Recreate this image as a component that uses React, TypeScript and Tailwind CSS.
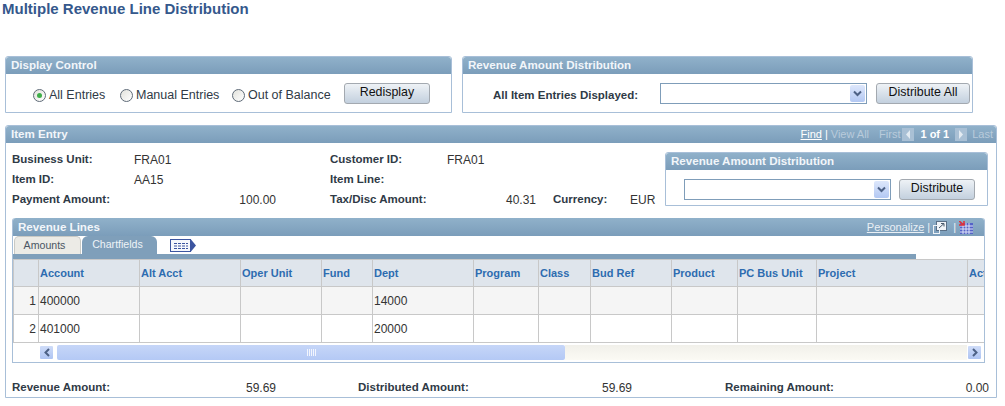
import type { ReactNode } from 'react'

const font = "font-['Liberation_Sans',Arial,sans-serif]"

const columns = [
  { label: '', width: 25 },
  { label: 'Account', width: 101 },
  { label: 'Alt Acct', width: 101 },
  { label: 'Oper Unit', width: 81 },
  { label: 'Fund', width: 51 },
  { label: 'Dept', width: 101 },
  { label: 'Program', width: 65 },
  { label: 'Class', width: 52 },
  { label: 'Bud Ref', width: 81 },
  { label: 'Product', width: 66 },
  { label: 'PC Bus Unit', width: 79 },
  { label: 'Project', width: 151 },
  { label: 'Activity', width: 60 },
]

const rows = [
  { n: 1, account: '400000', dept: '14000', bg: 'bg-[#f5f5f5]' },
  { n: 2, account: '401000', dept: '20000', bg: 'bg-white' },
]

function PanelHeader({ title, tall, children }: { title: string; tall?: boolean; children?: ReactNode }) {
  return (
    <div className={`flex items-center justify-between rounded-t-[3px] bg-gradient-to-b from-[#90b1ca] to-[#7b9dba] pl-[5px] pr-[3px] ${tall ? 'h-[18px]' : 'h-[17px]'}`}>
      <span className="pb-[1px] text-[11.6px] font-bold leading-none text-[#f2f6fa]">{title}</span>
      {children}
    </div>
  )
}

function Button({ label, width }: { label: string; width: string }) {
  return (
    <div className={`flex h-[21px] items-center justify-center rounded-[3px] border border-[#a3a9b0] bg-gradient-to-b from-[#eef2f6] to-[#c3d0de] pb-[2px] text-[12.4px] text-[#111] ${width}`}>
      {label}
    </div>
  )
}

function Select() {
  return (
    <div className="flex h-[21px] w-[207px] items-center justify-end border border-[#7f9db9] bg-white pr-[1px]">
      <div className="flex h-[17px] w-[15px] items-center justify-center rounded-[2px] bg-gradient-to-b from-[#dde7fb] to-[#b3c8f3]">
        <svg width="9" height="7" viewBox="0 0 9 7">
          <path d="M1 1.5 L4.5 5 L8 1.5" fill="none" stroke="#4d6185" strokeWidth="2" />
        </svg>
      </div>
    </div>
  )
}

function Radio({ checked, label, className }: { checked?: boolean; label: string; className: string }) {
  return (
    <div className={`flex items-center ${className}`}>
      <span className="flex h-[13px] w-[13px] items-center justify-center rounded-full border border-[#5f6b78] bg-gradient-to-br from-[#e2e2dc] to-white">
        {checked && <span className="h-[5px] w-[5px] rounded-full bg-[#3fae49]" />}
      </span>
      <span className="ml-[3px] text-[12.5px] text-[#2f3a46]">{label}</span>
    </div>
  )
}

function PagerArrow({ left }: { left?: boolean }) {
  return (
    <span className="flex h-[13px] w-[12px] items-center justify-center bg-[#a9c0d5]">
      <svg width="6" height="9" viewBox="0 0 6 9">
        <path d={left ? 'M5 0 L1 4.5 L5 9 Z' : 'M1 0 L5 4.5 L1 9 Z'} fill="#e3ebf2" />
      </svg>
    </span>
  )
}

function ScrollButton({ left }: { left?: boolean }) {
  return (
    <div className="flex h-[15px] w-[15px] items-center justify-center rounded-[2px] border border-white bg-gradient-to-b from-[#cfdcf8] to-[#aec4f2]">
      <svg width="8" height="9" viewBox="0 0 8 9">
        <path d={left ? 'M6 1 L2.5 4.5 L6 8' : 'M2 1 L5.5 4.5 L2 8'} fill="none" stroke="#4d6185" strokeWidth="2" />
      </svg>
    </div>
  )
}

const label = 'text-[11.5px] font-bold text-[#2f3a46]'
const value = 'text-[12px] text-[#333]'

export default function App() {
  return (
    <div className={`${font} h-[406px] w-[1005px] overflow-hidden bg-white`}>
      <h1 className="h-[56px] pl-[2px] text-[15px] font-bold leading-[17px] text-[#35588c]">
        Multiple Revenue Line Distribution
      </h1>

      <div className="ml-[5px] flex gap-[10px]">
        <section className="h-[57px] w-[447px] rounded-t-[3px] border border-[#a8bfd8]">
          <PanelHeader title="Display Control" />
          <div className="flex pl-[27px] pt-[9px]">
            <div className="flex h-[21px] w-[311px] items-center pt-[3px]">
              <Radio checked label="All Entries" className="w-[87px]" />
              <Radio label="Manual Entries" className="w-[112px]" />
              <Radio label="Out of Balance" className="w-[112px]" />
            </div>
            <Button label="Redisplay" width="w-[86px]" />
          </div>
        </section>

        <section className="h-[57px] w-[511px] rounded-t-[3px] border border-[#a8bfd8]">
          <PanelHeader title="Revenue Amount Distribution" />
          <div className="flex items-start pl-[30px] pt-[9px]">
            <span className={`${label} w-[167px] pt-[4px]`}>All Item Entries Displayed:</span>
            <Select />
            <div className="w-[9px]" />
            <Button label="Distribute All" width="w-[94px]" />
          </div>
        </section>
      </div>

      <section className="ml-[5px] mt-[12px] h-[273px] w-[992px] rounded-t-[3px] border border-[#a8bfd8]">
        <PanelHeader title="Item Entry">
          <div className="flex items-center text-[11px] text-[#b9cbdb]">
            <span className="text-white underline">Find</span>
            <span className="ml-[3px] text-white">|</span>
            <span className="ml-[3px]">View All</span>
            <span className="ml-[10px]">First</span>
            <span className="ml-[2px]"><PagerArrow left /></span>
            <span className="ml-[6px] font-bold text-white">1 of 1</span>
            <span className="ml-[6px]"><PagerArrow /></span>
            <span className="ml-[5px]">Last</span>
          </div>
        </PanelHeader>

        <div className="flex h-[75px]">
          <div className="grid h-[61px] w-[659px] grid-cols-[122px_142px_54px_117px_89px_17px_77px_1fr] auto-rows-[20px] items-center pl-[6px] pt-[7px]">
            <span className={label}>Business Unit:</span>
            <span className={value}>FRA01</span>
            <span />
            <span className={label}>Customer ID:</span>
            <span className={value}>FRA01</span>
            <span /><span /><span />
            <span className={label}>Item ID:</span>
            <span className={value}>AA15</span>
            <span />
            <span className={label}>Item Line:</span>
            <span /><span /><span /><span />
            <span className={label}>Payment Amount:</span>
            <span className={`${value} text-right`}>100.00</span>
            <span />
            <span className={label}>Tax/Disc Amount:</span>
            <span className={`${value} text-right`}>40.31</span>
            <span />
            <span className={label}>Currency:</span>
            <span className={value}>EUR</span>
          </div>

          <section className="mt-[9px] h-[54px] w-[323px] rounded-t-[3px] border border-[#a8bfd8]">
            <PanelHeader title="Revenue Amount Distribution" />
            <div className="flex pl-[18px] pt-[9px]">
              <Select />
              <div className="w-[8px]" />
              <Button label="Distribute" width="w-[76px]" />
            </div>
          </section>
        </div>

        <div className="ml-[6px] h-[145px] w-[973px] rounded-t-[3px] border-x border-b border-[#a8bfd8]">
          <PanelHeader title="Revenue Lines" tall>
            <div className="flex items-center text-[11px] text-[#eaf0f5]">
              <span className="underline">Personalize</span>
              <span className="ml-[3px]">|</span>
              <svg className="ml-[3px]" width="14" height="13" viewBox="0 0 14 13">
                <rect x="3.5" y="0.5" width="10" height="9" fill="#f0f4f8" stroke="#5a6f86" />
                <rect x="0.5" y="4.5" width="6" height="8" fill="none" stroke="#eef2f6" />
                <path d="M6 7 L11 2.5 M8 2.5 H11 V5.5" fill="none" stroke="#47586b" />
              </svg>
              <span className="ml-[6px]">|</span>
              <svg className="ml-[3px] mr-[8px]" width="14" height="13" viewBox="0 0 14 13">
                <rect x="1" y="2" width="13" height="11" fill="#5463c8" />
                <path d="M1 5H14M1 8H14M1 11H14M4 2V13M7 2V13M10 2V13" stroke="#dfe3f7" />
                <path d="M0 0 L5 4 M0 4 H5 V0" fill="none" stroke="#e0303a" strokeWidth="1.5" />
              </svg>
            </div>
          </PanelHeader>

          <div className="flex h-[18px] items-end pl-[1px]">
            <div className="flex h-[18px] w-[67px] items-center justify-center rounded-t-[5px] border-x border-t border-[#c9c9c4] bg-[#ecebe6] pr-[6px] text-[10.6px] text-[#4a5563]">
              Amounts
            </div>
            <div className="ml-[1px] flex h-[18px] w-[75px] items-center justify-center rounded-t-[6px] bg-[#7f9fba] pr-[4px] text-[10.6px] text-[#eef3f7]">
              Chartfields
            </div>
            <svg className="ml-[13px] mb-[1px]" width="27" height="15" viewBox="0 0 27 15">
              <rect x="0.5" y="1.5" width="20" height="12" fill="#f6f8fc" stroke="#3c55a0" />
              <path d="M4 5.5H18M4 8H18M4 10.5H18" stroke="#3c55a0" strokeDasharray="3 1" />
              <path d="M21 1.5 L26 7.5 L21 13.5 Z" fill="#3c55a0" />
            </svg>
          </div>
          <div className="h-[5px] w-[903px] bg-[#7f9fba]" />

          <div className="overflow-hidden">
            <table className="w-[1013px] table-fixed border-collapse text-[12px] text-[#333]">
              <colgroup>
                {columns.map(c => <col key={c.label} style={{ width: c.width }} />)}
              </colgroup>
              <thead>
                <tr className="h-[27px]">
                  {columns.map(c => (
                    <th key={c.label} className="overflow-hidden whitespace-nowrap border border-[#c8c8c8] bg-[#dfe5ec] pl-[1px] text-left text-[11px] font-bold text-[#2d6cb0]">
                      {c.label}
                    </th>
                  ))}
                </tr>
              </thead>
              <tbody>
                {rows.map(r => (
                  <tr key={r.n} className={`h-[28px] ${r.bg}`}>
                    {columns.map((c, i) => (
                      <td key={c.label} className={`border border-[#c8c8c8] pl-[1px] ${i === 0 ? 'pr-[2px] text-right' : ''}`}>
                        {i === 0 ? r.n : c.label === 'Account' ? r.account : c.label === 'Dept' ? r.dept : ''}
                      </td>
                    ))}
                  </tr>
                ))}
              </tbody>
            </table>
          </div>

          <div className="flex h-[18px] items-center pl-[26px] pr-[2px]">
            <ScrollButton left />
            <div className="ml-[3px] flex h-[15px] w-[508px] items-center justify-center rounded-[2px] bg-gradient-to-b from-[#c6d6f8] to-[#b4c9f5]">
              <svg width="9" height="7" viewBox="0 0 9 7">
                <path d="M0.5 0V7M2.5 0V7M4.5 0V7M6.5 0V7M8.5 0V7" stroke="#f2f5fd" />
              </svg>
            </div>
            <div className="h-[15px] flex-1 bg-gradient-to-b from-[#f1f0ea] to-[#fbfaf4]" />
            <ScrollButton />
          </div>
        </div>

        <div className="mt-[16px] flex items-center pl-[6px]">
          <div className="flex w-[264px] items-center justify-between">
            <span className={label}>Revenue Amount:</span>
            <span className={value}>59.69</span>
          </div>
          <div className="ml-[82px] flex w-[274px] items-center justify-between">
            <span className={label}>Distributed Amount:</span>
            <span className={value}>59.69</span>
          </div>
          <div className="ml-[93px] flex w-[264px] items-center justify-between">
            <span className={label}>Remaining Amount:</span>
            <span className={value}>0.00</span>
          </div>
        </div>
      </section>
    </div>
  )
}
